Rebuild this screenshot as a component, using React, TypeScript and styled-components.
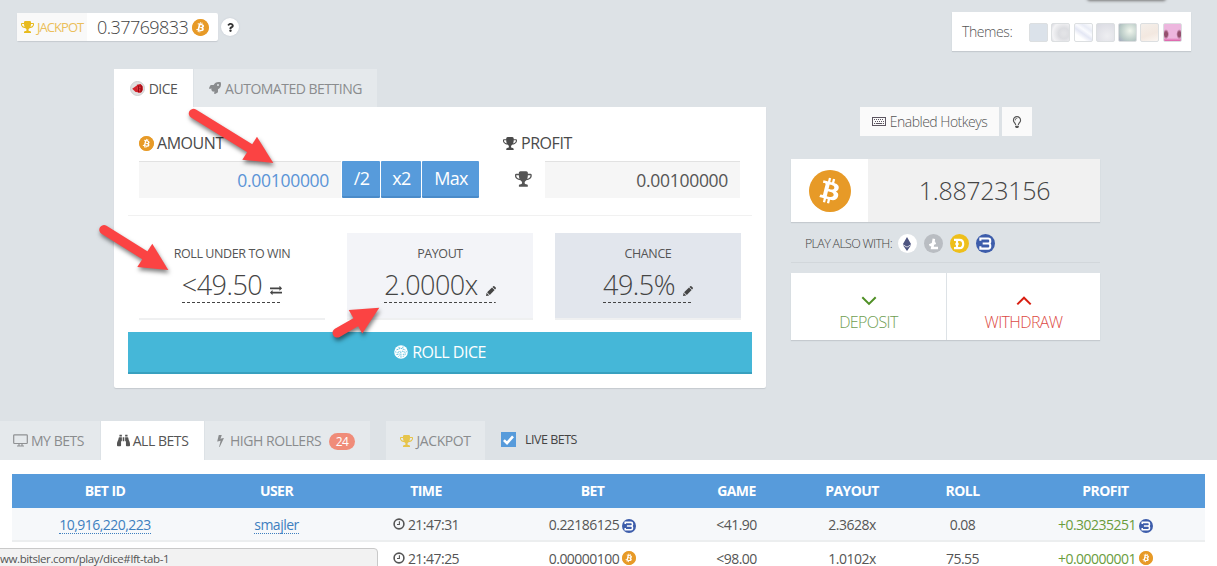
import React from "react";
import styled, { createGlobalStyle, css } from "styled-components";
import {
  FaBinoculars,
  FaBitcoin,
  FaEthereum,
  FaQuestion,
  FaRegLightbulb,
  FaRocket,
} from "react-icons/fa";

const GlobalStyle = createGlobalStyle`
  * { box-sizing: border-box; }
  html, body, #root { height: 100%; }
  body {
    margin: 0;
    overflow: hidden;
    background: #dde2e6;
    color: #555;
    font-family: "Open Sans", "Liberation Sans", sans-serif;
    font-size: 14px;
  }
  svg { display: block; flex: none; }
`;

/* ---------- icons ---------- */

type IconProps = { size?: number; color?: string };

const Glyph = ({ d, size = 14, color = "currentColor" }: IconProps & { d: string }) => (
  <svg width={size} height={size} viewBox="0 0 1792 1792" fill={color}>
    <path d={d} />
  </svg>
);

const TROPHY =
  "M458 883q-74-162-74-371h-256v96q0 78 94.5 162t235.5 113zm1078-275v-96h-256q0 209-74 371 141-29 235.5-113t94.5-162zm128-128v128q0 71-41.5 143t-112 130-173 97.5-215.5 44.5q-42 54-95 95-38 34-52.5 72.5t-14.5 89.5q0 54 30.5 91t97.5 37q75 0 133.5 45.5t58.5 114.5v64q0 14-9 23t-23 9h-832q-14 0-23-9t-9-23v-64q0-69 58.5-114.5t133.5-45.5q67 0 97.5-37t30.5-91q0-51-14.5-89.5t-52.5-72.5q-53-41-95-95-113-5-215.5-44.5t-173-97.5-112-130-41.5-143v-128q0-40 28-68t68-28h288v-96q0-66 47-113t113-47h576q66 0 113 47t47 113v96h288q40 0 68 28t28 68z";
const EXCHANGE =
  "M1792 1184v192q0 13-9.5 22.5t-22.5 9.5h-1376v192q0 13-9.5 22.5t-22.5 9.5q-12 0-24-10l-319-320q-9-9-9-22 0-14 9-23l320-320q9-9 23-9 13 0 22.5 9.5t9.5 22.5v192h1376q13 0 22.5 9.5t9.5 22.5zm0-544q0 14-9 23l-320 320q-9 9-23 9-13 0-22.5-9.5t-9.5-22.5v-192h-1376q-13 0-22.5-9.5t-9.5-22.5v-192q0-13 9.5-22.5t22.5-9.5h1376v-192q0-14 9-23t23-9q12 0 24 10l319 319q9 9 9 23z";
const BOLT =
  "M1333 566q18 20 7 44l-540 1157q-13 25-42 25-4 0-14-2-17-5-25.5-19t-4.5-30l197-808-406 101q-4 1-12 1-18 0-31-11-18-15-13-39l201-825q4-14 16-23t28-9h328q19 0 32 12.5t13 29.5q0 8-5 18l-171 463 396-98q8-2 12-2 19 0 34 15z";

const Trophy = (p: IconProps) => <Glyph d={TROPHY} {...p} />;

const Pencil = () => (
  <svg width="10" height="10" viewBox="0 0 10 10" fill="currentColor">
    <path d="M0 10 .6 6.8 3.2 9.4z" />
    <path d="M1.1 6.2 6 1.4 8.6 4 3.8 8.9z" />
    <path d="M6.5.9 7.2.3q.6-.5 1.2 0l1.3 1.3q.5.6 0 1.2l-.6.7z" />
  </svg>
);

const Clock = () => (
  <svg width="12" height="12" viewBox="0 0 12 12" fill="none" stroke="#555" strokeWidth="1.6">
    <circle cx="6" cy="6" r="4.9" />
    <path d="M6.4 3.2v3.3H4" strokeWidth="1.1" />
  </svg>
);

const MonitorIcon = () => (
  <svg width="15" height="13" viewBox="0 0 15 13" fill="none" stroke="#8f9193" strokeWidth="1.2">
    <rect x="0.7" y="0.8" width="13.6" height="8.7" rx="0.8" />
    <path d="M6 9.5v2M9 9.5v2M4 12h7" />
  </svg>
);

const KeyboardIcon = () => (
  <svg width="14" height="9" viewBox="0 0 14 9" fill="none" stroke="#5c5560">
    <rect x="0.5" y="0.5" width="13" height="8" />
    <path d="M2 2.5h10M3 4.5h9" strokeDasharray="1 1" />
    <path d="M2 6.5h1.2M4 6.5h6M10.8 6.5H12" />
  </svg>
);

const DiceIcon = () => (
  <svg width="15" height="15" viewBox="0 0 15 15">
    <circle cx="7.5" cy="7.5" r="7" fill="#e0e0e0" stroke="#cfcfcf" />
    <path d="M2.2 7.8 6.8 4.4 8.4 11.2 5.6 11z" fill="#d3222a" />
    <path d="M6.8 3.8 10.6 3 12.8 5.4 12.9 9 11 11.8 8 11.8z" fill="#cb1820" />
    <path d="M8.7 4.6 8.5 11M11.2 4.4v6.6" stroke="#7d0a12" strokeWidth="0.8" />
    <circle cx="9.9" cy="6.2" r="0.4" fill="#f8c8ca" />
    <circle cx="9.8" cy="9" r="0.4" fill="#f8c8ca" />
  </svg>
);

const RollIcon = () => (
  <svg width="14" height="14" viewBox="0 0 14 14">
    <circle cx="7" cy="7" r="6.8" fill="#fff" />
    <path
      d="M2.5 4.8 6.8 3.2M6.8 3.2 11.4 5M3.5 7.6 6.2 6.2M8 6l3.2 1.4M6.8 6.5 7 12.6M2.5 9.5 5.6 9M8.8 9.4 12 9M4.5 1.8 5.5 3M9.2 1.5 8.6 3M4.4 11.6 5.4 10.6M9 11.8l.9-1.2M1.2 6.8l1.2.4M12.7 6.6l-1 .5"
      stroke="#45b7d8"
      strokeWidth="0.85"
      strokeDasharray="1.8 0.5"
      fill="none"
    />
  </svg>
);

const CheckIcon = () => (
  <svg width="11" height="10" viewBox="0 0 11 10" fill="none" stroke="#fff" strokeWidth="2.6">
    <path d="M0.9 5.1 4 8.1 10 1.3" />
  </svg>
);

const Chevron = ({ up }: { up?: boolean }) => (
  <svg width="16" height="10" viewBox="0 0 16 10" fill="none" stroke="currentColor" strokeWidth="2">
    <path d={up ? "M1.3 8.4 8 1.7l6.7 6.7" : "M1.3 1.2 8 7.9l6.7-6.7"} />
  </svg>
);

const CoinBadge = styled.span<{ $size: number; $bg: string; $fg?: string }>`
  display: inline-flex;
  align-items: center;
  justify-content: center;
  flex: none;
  width: ${(p) => p.$size}px;
  height: ${(p) => p.$size}px;
  border-radius: 50%;
  background: ${(p) => p.$bg};
  color: ${(p) => p.$fg ?? "#fff"};
`;

const Bitcoin = ({ size }: { size: number }) => (
  <CoinBadge $size={size} $bg="radial-gradient(#fff 60%, #e79a27 62%)" $fg="#e79a27">
    <FaBitcoin size={size} />
  </CoinBadge>
);

const Betcoin = ({ size }: { size: number }) => (
  <svg width={size} height={size} viewBox="0 0 20 20">
    <circle cx="10" cy="10" r="10" fill="#3d5dab" />
    <path
      d="M4.6 7V4.8h8.2q2.2 0 2.2 2.2v1q0 2-2.2 2 2.2 0 2.2 2v1.2q0 2.2-2.2 2.2H4.6V13M7 10h6"
      fill="none"
      stroke="#fff"
      strokeWidth="2.2"
    />
  </svg>
);

const Litecoin = () => (
  <CoinBadge $size={19} $bg="#b9bdc2">
    <svg width="11" height="12" viewBox="0 0 11 12" fill="none" stroke="#fff" strokeWidth="2.6">
      <path d="M5.9.8 4.2 10H10M1.4 7.4 7.6 4.8" />
    </svg>
  </CoinBadge>
);

const Dogecoin = () => (
  <CoinBadge $size={19} $bg="#eebf1b">
    <svg width="12" height="12" viewBox="0 0 12 12" fill="none" stroke="#fff" strokeWidth="2.2">
      <path d="M1 1.8h5.4q3.8 0 3.8 4.2t-3.8 4.2H1M4 1.8v8.4" />
      <path d="M2 6h4" strokeWidth="1.2" />
    </svg>
  </CoinBadge>
);

/* ---------- header ---------- */

const Page = styled.div`
  position: relative;
  height: 566px;
  width: 1217px;
  overflow: hidden;
  display: flex;
  flex-direction: column;
`;

const Header = styled.header`
  display: flex;
  align-items: flex-start;
  height: 69px;
  flex: none;
  padding: 12px 26px 0 17px;
`;

const JackpotBox = styled.div`
  display: flex;
  height: 28px;
  width: 201px;
  margin-top: 1px;
  background: #fff;
  border-radius: 2px;
  box-shadow: 0 1px 1px #c5cacf;
`;

const JackpotLabel = styled.div`
  display: flex;
  align-items: center;
  gap: 2px;
  width: 70px;
  padding-left: 4px;
  background: #f9f9f9;
  color: #ebbf5b;
  font-size: 13px;
  letter-spacing: -0.95px;
  white-space: nowrap;
`;

const JackpotValue = styled.div`
  display: flex;
  align-items: center;
  gap: 4px;
  padding-left: 10px;
  font-size: 18px;
  letter-spacing: -0.55px;
  font-weight: 300;
  color: #444;
`;

const Help = styled.span`
  display: flex;
  align-items: center;
  justify-content: center;
  width: 18px;
  height: 18px;
  margin: 6px 0 0 3px;
  border-radius: 50%;
  background: #fff;
  color: #333;
  box-shadow: 0 0 2px #c3c9d2;
`;

const Themes = styled.div`
  display: flex;
  align-items: center;
  width: 239px;
  height: 39px;
  margin-left: auto;
  padding-left: 10px;
  background: #fff;
  color: #555;
  box-shadow: 0 1px 1px #c5cacf;
`;

const ThemesLabel = styled.span`
  width: 67px;
  font-size: 14px;
  font-weight: 300;
  letter-spacing: -0.4px;
`;

const Swatch = styled.span<{ $fill: string }>`
  width: 19px;
  height: 19px;
  margin: 1px 3.3px 0 0;
  border: 1px solid #dcdfe1;
  border-radius: 2px;
  background: ${(p) => p.$fill};
`;

const TopShadow = styled.div`
  position: absolute;
  top: -8px;
  left: 1087px;
  width: 79px;
  height: 8px;
  border-radius: 3px;
  box-shadow: 0 1px 3px #777;
`;

/* ---------- game panel ---------- */

const Main = styled.main`
  display: flex;
  gap: 25px;
  height: 352px;
  flex: none;
  padding-left: 114px;
`;

const Game = styled.section`
  width: 652px;
`;

const Tabs = styled.div`
  display: flex;
  height: 38px;
`;

const Tab = styled.div<{ $active?: boolean; $width: number }>`
  display: flex;
  align-items: center;
  justify-content: center;
  gap: 4px;
  width: ${(p) => p.$width}px;
  margin-right: 1px;
  background: ${(p) => (p.$active ? "#fff" : "#e5e9ec")};
  color: ${(p) => (p.$active ? "#555" : "#8a8c8e")};
  font-size: 14px;
  letter-spacing: -0.5px;
  white-space: nowrap;
`;

const Card = styled.div`
  height: 281px;
  padding: 0 14px;
  background: #fff;
  border-radius: 0 0 2px 2px;
  box-shadow: 0 1px 1px #c5cacf;
`;

const Stakes = styled.div`
  display: flex;
  height: 109px;
  padding: 26px 12px 0 11px;
  border-bottom: 1px solid #f1f1f1;
`;

const AmountField = styled.div`
  width: 364px;
`;

const ProfitField = styled.div`
  width: 237px;
`;

const FieldLabel = styled.div`
  display: flex;
  align-items: center;
  gap: 3px;
  height: 20px;
  margin-bottom: 8px;
  color: #4a4a4a;
  font-size: 16px;
  letter-spacing: -0.45px;
`;

const FieldRow = styled.div`
  display: flex;
  align-items: center;
  height: 37px;
`;

const ValueBox = styled.div<{ $width: number; $color: string }>`
  width: ${(p) => p.$width}px;
  height: 37px;
  padding: 6px 12px 0 0;
  text-align: right;
  font-size: 17.5px;
  letter-spacing: -0.3px;
  line-height: 24px;
  background: #f6f6f6;
  border-top: 1px solid #e2e2e2;
  color: ${(p) => p.$color};
`;

const StakeButton = styled.div<{ $width: number }>`
  display: flex;
  align-items: center;
  justify-content: center;
  width: ${(p) => p.$width}px;
  height: 37px;
  margin-left: 1px;
  padding: 0 0 1px 1px;
  background: #579bdb;
  border-bottom: 2px solid #4a8bc9;
  border-radius: 1px;
  color: #fff;
  font-size: 18px;
  letter-spacing: -0.7px;
`;

const ProfitIcon = styled.span`
  display: flex;
  width: 42px;
  padding: 0 0 2px 12px;
`;

const Odds = styled.div`
  display: flex;
  gap: 22px;
  padding: 17px 11px 0;
`;

const OddsBox = styled.div<{ $bg: string }>`
  display: flex;
  flex-direction: column;
  align-items: center;
  width: 186px;
  height: 87px;
  padding-top: 12px;
  background: ${(p) => p.$bg};
  border-bottom: 2px solid #eff0f1;
`;

const OddsLabel = styled.div`
  font-size: 12.5px;
  letter-spacing: -0.4px;
  line-height: 17px;
  color: #555;
`;

const OddsValue = styled.div`
  display: flex;
  align-items: flex-end;
  gap: 8px;
  height: 37px;
  margin-top: 4px;
  padding-bottom: 5px;
  font-size: 27px;
  letter-spacing: -0.5px;
  font-weight: 300;
  line-height: 26px;
  color: #444;
  background: repeating-linear-gradient(90deg, #444 0 3px, transparent 3px 5px) bottom / 100% 1px
    no-repeat;
`;

const RollButton = styled.div`
  display: flex;
  align-items: center;
  justify-content: center;
  gap: 4px;
  height: 42px;
  margin-top: 12px;
  background: #45b7d8;
  border-bottom: 2px solid #38a0bf;
  color: #fff;
  font-size: 16px;
  letter-spacing: -0.5px;
`;

/* ---------- wallet column ---------- */

const Wallet = styled.aside`
  width: 309px;
  padding-top: 38px;
`;

const Hotkeys = styled.div`
  display: flex;
  gap: 3px;
  padding-left: 69px;
`;

const HotkeyButton = styled.div<{ $width: number }>`
  display: flex;
  align-items: center;
  justify-content: center;
  gap: 4px;
  width: ${(p) => p.$width}px;
  height: 29px;
  background: #fafafa;
  color: #555;
  font-size: 14px;
  letter-spacing: -0.5px;
  font-weight: 300;
  white-space: nowrap;
`;

const Balance = styled.div`
  display: flex;
  height: 63px;
  margin-top: 23px;
  background: #f1f1f1;
  box-shadow: 0 1px 1px #c5cacf;
`;

const BalanceCoin = styled.div`
  display: flex;
  align-items: center;
  justify-content: center;
  width: 77px;
  padding-left: 1px;
  background: #fff;
`;

const BalanceValue = styled.div`
  flex: 1;
  padding-left: 1px;
  text-align: center;
  font-size: 25px;
  letter-spacing: -0.3px;
  font-weight: 300;
  line-height: 63px;
  color: #444;
`;

const PlayAlso = styled.div`
  display: flex;
  align-items: center;
  height: 41px;
  padding: 3px 0 0 14px;
  border-bottom: 1px solid #d2d7db;
  font-size: 12.5px;
  font-weight: 300;
  letter-spacing: -0.7px;
  color: #444;
`;

const AltCoins = styled.span`
  display: flex;
  gap: 7px;
  margin-left: 6px;
`;

const Transfers = styled.div`
  display: grid;
  grid-template-columns: 155px 1fr;
  column-gap: 1px;
  height: 67px;
  margin-top: 10px;
  box-shadow: 0 1px 1px #c5cacf;
`;

const Transfer = styled.div<{ $text: string; $icon: string }>`
  display: flex;
  flex-direction: column;
  align-items: center;
  padding-top: 23px;
  background: #fff;
  color: ${(p) => p.$icon};
  > span {
    margin-top: 5px;
    color: ${(p) => p.$text};
    font-size: 16px;
    letter-spacing: -0.6px;
    font-weight: 300;
    line-height: 22px;
  }
`;

/* ---------- bets ---------- */

const BetTabs = styled.nav`
  display: flex;
  height: 39px;
  flex: none;
`;

const BetTab = styled(Tab)<{ $gap?: number; $shift?: number }>`
  margin-right: ${(p) => p.$gap ?? 1}px;
  padding-right: ${(p) => p.$shift ?? 0}px;
  gap: 3px;
  letter-spacing: -0.45px;
`;

const Count = styled.span`
  width: 26px;
  height: 17px;
  margin: 2px 0 0 5px;
  border-radius: 9px;
  background: #f08c79;
  color: #fff;
  font-size: 12px;
  line-height: 17px;
  text-align: center;
`;

const LiveBets = styled.div`
  display: flex;
  align-items: center;
  gap: 9px;
  height: 37px;
  color: #444;
  font-size: 12.5px;
  letter-spacing: -0.5px;
`;

const Checkbox = styled.span`
  display: flex;
  align-items: center;
  justify-content: center;
  width: 15px;
  height: 15px;
  background: #579bdb;
`;

const BetsTable = styled.section`
  flex: 1;
  padding: 14px 12px 0;
  background: #fff;
`;

const rowGrid = css`
  display: grid;
  grid-template-columns: 186px 157px 142px 191px 97px 134px 87px 199px;
  justify-items: center;
  align-items: center;
  height: 34px;
  font-size: 14px;
`;

const HeadRow = styled.div`
  ${rowGrid}
  padding-bottom: 1px;
  background: #579bdb;
  color: #fff;
  font-weight: 700;
  letter-spacing: -0.55px;
`;

const BetRow = styled.div<{ $shaded?: boolean }>`
  ${rowGrid}
  background: ${(p) => (p.$shaded ? "#f6f8fa" : "#fff")};
  border-bottom: 2px solid #eceeef;
  color: #555;
  letter-spacing: -0.52px;
`;

const Cell = styled.span<{ $win?: boolean }>`
  display: flex;
  align-items: center;
  gap: 3px;
  color: ${(p) => (p.$win ? "#6a9c3c" : "inherit")};
`;

const BetLink = styled.a`
  margin-top: 2px;
  color: #3e7fbf;
  line-height: 17px;
  border-bottom: 1px dotted #3e7fbf;
`;

const StatusBar = styled.div`
  position: absolute;
  left: -1px;
  bottom: -1px;
  width: 379px;
  height: 19px;
  padding-top: 2px;
  overflow: hidden;
  border: 1px solid #c9c9c9;
  border-top-right-radius: 4px;
  background: #f2f2f2;
  color: #555;
  font-size: 11.5px;
  letter-spacing: -0.4px;
  line-height: 16px;
  white-space: nowrap;
`;

const Arrows = styled.svg`
  position: absolute;
  inset: 0;
  pointer-events: none;
  filter: drop-shadow(1px 3px 2px rgba(0, 0, 0, 0.5));
`;

const ARROWS = [
  { shaft: "M193.5 113.5 251 149", head: "257,136.7 273.3,163 242.3,159.7" },
  { shaft: "M104 229.8 146 256", head: "152.3,243.7 168.3,270 137.3,267" },
  { shaft: "M337.3 332.8 357 321.5", head: "348.7,310 379.3,307.8 362.3,333.5" },
];

const THEMES = [
  "#dbe2ea",
  "radial-gradient(circle at 70% 55%, #e2e3e6 10%, #dcdde1 35%, #f3f3f5 75%, #d8d9df)",
  "linear-gradient(35deg, #fff 25%, #e4e7f4 45%, #fafbfe 60%, #e9ecf6 75%, #fff)",
  "radial-gradient(circle at 60% 70%, #eeeef1, #d9dae2)",
  "radial-gradient(circle at 65% 40%, #f0f6ed, #b9cac6 65%, #a3a8bf)",
  "linear-gradient(160deg, #f4efea, #f3e8e0 60%, #fbf6f2)",
  "radial-gradient(ellipse 3px 5px at 12% 60%, #94506e 50%, transparent), radial-gradient(ellipse 3px 5px at 90% 60%, #94506e 50%, transparent), linear-gradient(#edb6de 82%, #dc5ca5)",
];

const BETS = [
  { id: "10,916,220,223", user: "smajler", time: "21:47:31", bet: "0.22186125", game: "<41.90", payout: "2.3628x", roll: "0.08", profit: "+0.30235251", coin: "betcoin" },
  { id: "", user: "", time: "21:47:25", bet: "0.00000100", game: "<98.00", payout: "1.0102x", roll: "75.55", profit: "+0.00000001", coin: "bitcoin" },
];

const HEADINGS = ["BET ID", "USER", "TIME", "BET", "GAME", "PAYOUT", "ROLL", "PROFIT"];

const RowCoin = styled.span`
  margin-top: 3px;
`;

const CoinOf = ({ name }: { name: string }) => (
  <RowCoin>{name === "betcoin" ? <Betcoin size={14} /> : <Bitcoin size={14} />}</RowCoin>
);

const Edit = styled.span`
  margin-bottom: 2px;
`;

export default function App() {
  return (
    <Page>
      <GlobalStyle />
      <TopShadow />
      <Header>
        <JackpotBox>
          <JackpotLabel>
            <Trophy size={14} color="#e8bb1e" />
            JACKPOT
          </JackpotLabel>
          <JackpotValue>
            0.37769833
            <Bitcoin size={17} />
          </JackpotValue>
        </JackpotBox>
        <Help>
          <FaQuestion size={9} />
        </Help>
        <Themes>
          <ThemesLabel>Themes:</ThemesLabel>
          {THEMES.map((fill) => (
            <Swatch key={fill} $fill={fill} />
          ))}
        </Themes>
      </Header>

      <Main>
        <Game>
          <Tabs>
            <Tab $active $width={79}>
              <DiceIcon />
              DICE
            </Tab>
            <Tab $width={183}>
              <FaRocket size={12} />
              AUTOMATED BETTING
            </Tab>
          </Tabs>
          <Card>
            <Stakes>
              <AmountField>
                <FieldLabel>
                  <Bitcoin size={15} />
                  AMOUNT
                </FieldLabel>
                <FieldRow>
                  <ValueBox $width={202} $color="#5a94d6">0.00100000</ValueBox>
                  <StakeButton $width={38}>/2</StakeButton>
                  <StakeButton $width={40}>x2</StakeButton>
                  <StakeButton $width={57}>Max</StakeButton>
                </FieldRow>
              </AmountField>
              <ProfitField>
                <FieldLabel>
                  <Trophy size={15} />
                  PROFIT
                </FieldLabel>
                <FieldRow>
                  <ProfitIcon>
                    <Trophy size={18} color="#555" />
                  </ProfitIcon>
                  <ValueBox $width={195} $color="#555">0.00100000</ValueBox>
                </FieldRow>
              </ProfitField>
            </Stakes>
            <Odds>
              <OddsBox $bg="#fff">
                <OddsLabel>ROLL UNDER TO WIN</OddsLabel>
                <OddsValue>
                  &lt;49.50
                  <Edit><Glyph d={EXCHANGE} size={12} /></Edit>
                </OddsValue>
              </OddsBox>
              <OddsBox $bg="#f3f4f8">
                <OddsLabel>PAYOUT</OddsLabel>
                <OddsValue>
                  2.0000x
                  <Edit><Pencil /></Edit>
                </OddsValue>
              </OddsBox>
              <OddsBox $bg="#e2e6ed">
                <OddsLabel>CHANCE</OddsLabel>
                <OddsValue>
                  49.5%
                  <Edit><Pencil /></Edit>
                </OddsValue>
              </OddsBox>
            </Odds>
            <RollButton>
              <RollIcon />
              ROLL DICE
            </RollButton>
          </Card>
        </Game>

        <Wallet>
          <Hotkeys>
            <HotkeyButton $width={139}>
              <KeyboardIcon />
              Enabled Hotkeys
            </HotkeyButton>
            <HotkeyButton $width={30}>
              <FaRegLightbulb size={12} />
            </HotkeyButton>
          </Hotkeys>
          <Balance>
            <BalanceCoin>
              <Bitcoin size={42} />
            </BalanceCoin>
            <BalanceValue>1.88723156</BalanceValue>
          </Balance>
          <PlayAlso>
            PLAY ALSO WITH:
            <AltCoins>
              <CoinBadge $size={19} $bg="#fff" $fg="#4d5480">
                <FaEthereum size={14} />
              </CoinBadge>
              <Litecoin />
              <Dogecoin />
              <Betcoin size={19} />
            </AltCoins>
          </PlayAlso>
          <Transfers>
            <Transfer $text="#6f9e52" $icon="#4f8f25">
              <Chevron />
              <span>DEPOSIT</span>
            </Transfer>
            <Transfer $text="#dc4a44" $icon="#d81e10">
              <Chevron up />
              <span>WITHDRAW</span>
            </Transfer>
          </Transfers>
        </Wallet>
      </Main>

      <BetTabs>
        <BetTab $width={100} $shift={3}>
          <MonitorIcon />
          MY BETS
        </BetTab>
        <BetTab $active $width={103}>
          <FaBinoculars size={13} />
          ALL BETS
        </BetTab>
        <BetTab $width={165} $gap={16} $shift={6}>
          <Glyph d={BOLT} size={13} />
          HIGH ROLLERS
          <Count>24</Count>
        </BetTab>
        <BetTab $width={99} $gap={16} $shift={1}>
          <Trophy size={14} color="#e6c44c" />
          JACKPOT
        </BetTab>
        <LiveBets>
          <Checkbox>
            <CheckIcon />
          </Checkbox>
          LIVE BETS
        </LiveBets>
      </BetTabs>

      <BetsTable>
        <HeadRow>
          {HEADINGS.map((h) => (
            <span key={h}>{h}</span>
          ))}
        </HeadRow>
        {BETS.map((b, i) => (
          <BetRow key={b.time} $shaded={i === 0}>
            {b.id ? <BetLink>{b.id}</BetLink> : <span />}
            {b.user ? <BetLink>{b.user}</BetLink> : <span />}
            <Cell>
              <Clock />
              {b.time}
            </Cell>
            <Cell>
              {b.bet}
              <CoinOf name={b.coin} />
            </Cell>
            <Cell>{b.game}</Cell>
            <Cell>{b.payout}</Cell>
            <Cell>{b.roll}</Cell>
            <Cell $win>
              {b.profit}
              <CoinOf name={b.coin} />
            </Cell>
          </BetRow>
        ))}
      </BetsTable>

      <StatusBar>ww.bitsler.com/play/dice#lft-tab-1</StatusBar>

      <Arrows width="1217" height="566" viewBox="0 0 1217 566">
        {ARROWS.map((a) => (
          <g key={a.head}>
            <path d={a.shaft} stroke="#fb4343" strokeWidth="9.5" strokeLinecap="round" />
            <polygon points={a.head} fill="#fb4343" />
          </g>
        ))}
      </Arrows>
    </Page>
  );
}
